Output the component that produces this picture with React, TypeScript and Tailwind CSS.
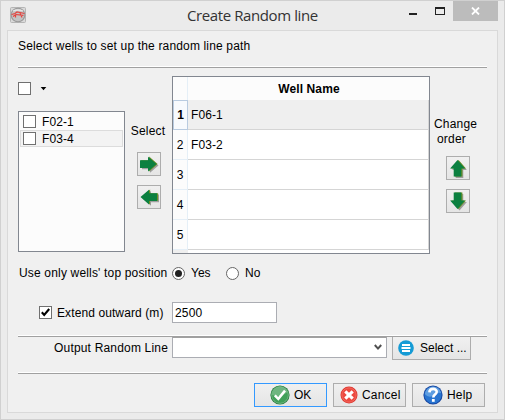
import type { ReactNode } from "react";

function Separator() {
  return <div className="h-[2px] w-[469px] border-t border-b border-t-white border-b-[#a0a0a0]" />;
}

function CheckBox({ checked = false }: { checked?: boolean }) {
  return (
    <span className="flex size-[13px] shrink-0 items-center justify-center border border-[#707070] bg-white">
      {checked && (
        <svg width="11" height="11" viewBox="0 0 11 11">
          <path d="M1.8 5.3 L4.2 8 L9.2 2" fill="none" stroke="#000" strokeWidth="2.1" />
        </svg>
      )}
    </span>
  );
}

function Radio({ checked = false }: { checked?: boolean }) {
  return (
    <span className="flex size-[13px] shrink-0 items-center justify-center rounded-full border border-[#666] bg-white">
      {checked && <span className="size-[7px] rounded-full bg-[#222]" />}
    </span>
  );
}

const rotations = { right: 0, down: 90, left: 180, up: 270 };

function ArrowButton({ dir }: { dir: keyof typeof rotations }) {
  const transform = `rotate(${rotations[dir]} 11 11)`;
  const d = "M2.5 7.2 H10.5 V3.6 L19 11 L10.5 18.4 V14.8 H2.5 Z";
  return (
    <button className="flex size-6 shrink-0 items-center justify-center border border-[#adadad] bg-gradient-to-b from-[#f0f0f0] to-[#e5e5e5]">
      <svg width="22" height="22" viewBox="0 0 22 22">
        <g transform="translate(1.5 1.4)" opacity="0.4">
          <path d={d} transform={transform} fill="#333" />
        </g>
        <g transform="translate(.6 0)">
          <path d={d} transform={transform} fill="#6a8f25" />
        </g>
        <g transform="translate(-.5 .1)">
          <path d={d} transform={transform} fill="#0b8040" />
        </g>
      </svg>
    </button>
  );
}

function DialogButton({ children, primary = false }: { children: ReactNode; primary?: boolean }) {
  return (
    <button
      className={`flex h-6 w-[73px] items-center border bg-gradient-to-b from-[#f0f0f0] to-[#e5e5e5] ${
        primary ? "border-[#3399ff]" : "border-[#adadad]"
      }`}
    >
      {children}
    </button>
  );
}

function OkIcon() {
  return (
    <svg className="ml-[15px] shrink-0" width="20" height="20" viewBox="0 0 20 20">
      <circle cx="10" cy="10" r="9.6" fill="#217b39" />
      <circle cx="10" cy="10" r="8.4" fill="#40a058" stroke="#8cc69a" strokeWidth=".7" />
      <path d="M2 10 A8 8 0 0 1 17.5 7 Q10 13 2 10" fill="#8fc59b" opacity=".6" />
      <path d="M4.8 10.3 L8.3 13.9 L15 5.6" fill="none" stroke="#fff" strokeWidth="2.5" />
    </svg>
  );
}

function CancelIcon() {
  return (
    <svg className="ml-[6px] shrink-0" width="18" height="18" viewBox="0 0 18 18">
      <circle cx="9" cy="9" r="8.5" fill="#df342d" />
      <circle cx="9" cy="9" r="7.2" fill="#ed4940" stroke="#f47c70" strokeWidth=".7" />
      <path d="M5.3 5.3 L12.7 12.7 M12.7 5.3 L5.3 12.7" stroke="#fff" strokeWidth="3.1" />
    </svg>
  );
}

function HelpIcon() {
  return (
    <svg className="ml-[10px] shrink-0" width="20" height="20" viewBox="0 0 20 20">
      <circle cx="10" cy="10" r="9.6" fill="#1746a0" />
      <circle cx="10" cy="10" r="8.6" fill="#2874d0" />
      <path d="M1.8 9 A8.3 8.3 0 0 1 18.2 8 Q12 7 10 11 Q5 13 1.8 9" fill="#79b4ea" opacity=".65" />
      <path d="M6.4 7.4 C6.5 2.7 14 2.9 13.7 7 C13.5 9.6 10.3 9.7 10.3 12.4" fill="none" stroke="#fff" strokeWidth="2.6" />
      <rect x="8.9" y="14" width="2.8" height="2.8" fill="#fff" />
    </svg>
  );
}

function TitleBar() {
  return (
    <div className="flex h-[29px] shrink-0 items-start">
      <svg className="mt-[6px] ml-[9px] shrink-0" width="16" height="16" viewBox="0 0 16 16">
        <rect x=".5" y=".5" width="15" height="15" rx="1" fill="#d9d9d9" stroke="#b5b5b5" />
        <circle cx="8" cy="8" r="6.8" fill="#c3c3c3" stroke="#999" strokeWidth="1.1" />
        <path d="M3 4 Q8 2 13 4" stroke="#e6e6e6" fill="none" strokeWidth="1.3" />
        <path
          d="M1.5 7.5 L5 6.5 L7 5 L10 5.5 L14.5 6.5 M3 9.5 L6 7.5 L13.5 8.3 M5.5 10.5 V7.5 M10 6 L12 10.5"
          stroke="#e5413c"
          strokeWidth="1.2"
          fill="none"
        />
      </svg>
      <h1 className="ml-[161px] mt-[2px] w-[150px] font-['Open_Sans',sans-serif] text-[15px] leading-6 tracking-[-0.4px] whitespace-nowrap text-[#333]">
        Create Random line
      </h1>
      <div className="mt-[12px] ml-[72px] h-[2px] w-2 shrink-0 bg-[#222]" />
      <div className="mt-[6px] ml-[18px] h-2 w-[10px] shrink-0 border border-t-2 border-[#222]" />
      <div className="ml-2 flex h-5 w-[45px] shrink-0 items-center justify-center bg-[#bcbcbc]">
        <svg width="9" height="8" viewBox="0 0 9 8">
          <path d="M1 .5 L8 7.5 M8 .5 L1 7.5" stroke="#fff" strokeWidth="1.8" />
        </svg>
      </div>
    </div>
  );
}

const wells = ["F06-1", "F03-2", "", "", ""];

function WellTable() {
  return (
    <div className="mt-2 h-[178px] w-[258px] shrink-0 border border-[#828790] bg-white">
      <div className="flex h-[23px] bg-[#fcfcfc]">
        <div className="w-[15px] border-r border-[#e5eff7]" />
        <div className="flex-1 pl-px text-center leading-6 font-bold tracking-[0.1px]">Well Name</div>
      </div>
      {wells.map((name, i) => (
        <div key={i} className="flex h-[30px]">
          <div
            className={`w-[15px] text-center leading-7 ${
              i === 0
                ? "border border-[#b9cbe0] bg-[#f8fafd] font-bold"
                : "border-r border-b border-[#e5eff7] bg-[#fcfcfc] pt-[1px]"
            }`}
          >
            {i + 1}
          </div>
          <div
            className={`w-[241px] border-r border-b border-[#d5d5d5] pt-[1px] pl-[3px] leading-7 tracking-[0.1px] ${
              i === 0 ? "bg-[#efefef]" : ""
            }`}
          >
            {name}
          </div>
        </div>
      ))}
      <div className="h-[3px] w-[15px] bg-[#efefef]" />
    </div>
  );
}

export default function App() {
  return (
    <div className="flex h-[420px] w-[505px] flex-col overflow-hidden border border-[#d0d0d0] bg-[#ebebeb] font-['Liberation_Sans',Arial,sans-serif] text-[12px] text-black">
      <TitleBar />
      <main className="ml-[6px] h-[383px] w-[491px] border border-[#d9d9d9] bg-[#f0f0f0] pl-[10px]">
        <p className="h-[35px] leading-[30px] tracking-[0.16px] whitespace-nowrap">
          Select wells to set up the random line path
        </p>
        <Separator />

        <section className="flex h-[194px]">
          <div className="w-[107px] shrink-0 pt-[14px]">
            <div className="flex items-center">
              <CheckBox />
              <svg className="ml-[9px]" width="7" height="5" viewBox="0 0 7 5">
                <path d="M.7 1 H6.3 L3.5 4.3 Z" fill="#000" />
              </svg>
            </div>
            <div className="mt-4 h-[141px] border border-[#828790] bg-[#fcfcfc] px-[1px] pt-[1px]">
              <div className="flex h-[17px] items-center pl-[3px]">
                <CheckBox />
                <span className="ml-[6px] tracking-[0.1px]">F02-1</span>
              </div>
              <div className="flex h-[17px] items-center border border-[#dcdcdc] bg-[#f3f3f3] pl-[2px]">
                <CheckBox />
                <span className="ml-[6px] tracking-[0.1px]">F03-4</span>
              </div>
            </div>
          </div>
          <div className="flex w-[47px] shrink-0 flex-col items-center pt-[55px]">
            <span className="mr-px mb-[13px] leading-4 tracking-[0.15px]">Select</span>
            <ArrowButton dir="right" />
            <div className="h-[9px]" />
            <ArrowButton dir="left" />
          </div>
          <WellTable />
          <div className="flex flex-col pt-[49px]">
            <span className="ml-1 leading-[15px] tracking-[0.2px]">Change</span>
            <span className="ml-[7px] leading-[15px] tracking-[0.2px]">order</span>
            <div className="mt-[9px] ml-4 flex flex-col gap-[9px]">
              <ArrowButton dir="up" />
              <ArrowButton dir="down" />
            </div>
          </div>
        </section>

        <section className="flex h-[22px] items-center">
          <span className="w-[154px] pl-[1px] tracking-[0.17px] whitespace-nowrap">Use only wells' top position</span>
          <Radio checked />
          <span className="ml-[6px] w-[35px]">Yes</span>
          <Radio />
          <span className="ml-[6px]">No</span>
        </section>

        <section className="mt-[18px] flex h-[21px] items-center pl-[21px]">
          <CheckBox checked />
          <span className="ml-[5px] w-[115px] tracking-[0.1px] whitespace-nowrap">Extend outward (m)</span>
          <div className="h-[21px] w-[105px] border border-[#abadb3] bg-white pt-px pl-[2px] leading-[19px] tracking-[0.2px]">
            2500
          </div>
        </section>

        <div className="mt-[12px]">
          <Separator />
        </div>
        <section className="flex h-[35px] items-start">
          <span className="w-[154px] pr-[4px] pt-px text-right leading-[20px] tracking-[0.18px] whitespace-nowrap">
            Output Random Line
          </span>
          <div className="flex h-[21px] w-[215px] items-center justify-end border border-t-[#a0a0a0] border-[#abadb3] bg-white pr-1">
            <svg width="8" height="7" viewBox="0 0 8 7">
              <path d="M.8 1 L4 4.6 L7.2 1" fill="none" stroke="#505050" strokeWidth="2" />
            </svg>
          </div>
          <button className="ml-[5px] flex h-[23px] w-[79px] items-center border border-t-0 border-[#adadad] bg-gradient-to-b from-[#f0f0f0] to-[#e5e5e5] pl-[5px]">
            <svg width="16" height="16" viewBox="0 0 16 16">
              <circle cx="8" cy="8" r="7.8" fill="#159bd5" />
              <path d="M4 5 H12 M3.5 8 H12.5 M4 11 H12" stroke="#fff" strokeWidth="1.8" />
            </svg>
            <span className="ml-[6px] whitespace-nowrap">Select ...</span>
          </button>
        </section>
        <Separator />

        <footer className="flex gap-[6px] pt-[9px] pl-[236px]">
          <DialogButton primary>
            <OkIcon />
            <span className="ml-1">OK</span>
          </DialogButton>
          <DialogButton>
            <CancelIcon />
            <span className="ml-[4px] tracking-[0.2px]">Cancel</span>
          </DialogButton>
          <DialogButton>
            <HelpIcon />
            <span className="ml-[4px] tracking-[0.2px]">Help</span>
          </DialogButton>
        </footer>
      </main>
    </div>
  );
}
